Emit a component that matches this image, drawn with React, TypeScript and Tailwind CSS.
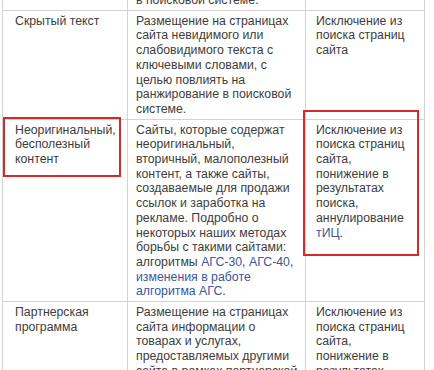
import React from 'react';

const A = ({ children }: { children: React.ReactNode }) => (
  <a href="#" className="text-[#3b55a0] no-underline">
    {children}
  </a>
);

const cell = 'border border-[#d3d3d3] align-top whitespace-nowrap pt-[3px] pb-[2px]';

export default function App() {
  return (
    <main
      className="relative h-[370px] w-[434px] overflow-hidden bg-white text-[12.3px] leading-[14.7px] text-[#3d3d3d]"
      style={{ fontFamily: '"Liberation Sans", Arial, sans-serif' }}
    >
      <table className="ml-[2px] -mt-[11px] w-[422px] table-fixed border-collapse">
        <colgroup>
          <col className="w-[125px]" />
          <col className="w-[178px]" />
          <col className="w-[119px]" />
        </colgroup>
        <tbody>
          <tr>
            <td className={`${cell} pl-[12px]`}></td>
            <td className={`${cell} pl-[8px]`}>в поисковой системе.</td>
            <td className={`${cell} pl-[10px]`}></td>
          </tr>
          <tr>
            <td className={`${cell} pl-[12px]`}>Скрытый текст</td>
            <td className={`${cell} pl-[8px]`}>
              Размещение на страницах
              <br />
              сайта невидимого или
              <br />
              слабовидимого текста с
              <br />
              ключевыми словами, с
              <br />
              целью повлиять на
              <br />
              ранжирование в поисковой
              <br />
              системе.
            </td>
            <td className={`${cell} pl-[10px]`}>
              Исключение из
              <br />
              поиска страниц
              <br />
              сайта
            </td>
          </tr>
          <tr>
            <td className={`${cell} pl-[12px]`}>
              Неоригинальный,
              <br />
              бесполезный
              <br />
              контент
            </td>
            <td className={`${cell} pl-[8px]`}>
              Сайты, которые содержат
              <br />
              неоригинальный,
              <br />
              вторичный, малополезный
              <br />
              контент, а также сайты,
              <br />
              создаваемые для продажи
              <br />
              ссылок и заработка на
              <br />
              рекламе. Подробно о
              <br />
              некоторых наших методах
              <br />
              борьбы с такими сайтами:
              <br />
              алгоритмы <A>АГС-30</A>, <A>АГС-40</A>,
              <br />
              <A>
                изменения в работе
                <br />
                алгоритма АГС
              </A>
              .
            </td>
            <td className={`${cell} pl-[10px]`}>
              Исключение из
              <br />
              поиска страниц
              <br />
              сайта,
              <br />
              понижение в
              <br />
              результатах
              <br />
              поиска,
              <br />
              аннулирование
              <br />
              <A>тИЦ</A>.
            </td>
          </tr>
          <tr>
            <td className={`${cell} pl-[12px]`}>
              Партнерская
              <br />
              программа
            </td>
            <td className={`${cell} pl-[8px]`}>
              Размещение на страницах
              <br />
              сайта информации о
              <br />
              товарах и услугах,
              <br />
              предоставляемых другими
              <br />
              сайта в рамках партнерской
              <br />
              программы.
            </td>
            <td className={`${cell} pl-[10px]`}>
              Исключение из
              <br />
              поиска страниц
              <br />
              сайта,
              <br />
              понижение в
              <br />
              результатах
              <br />
              поиска.
            </td>
          </tr>
        </tbody>
      </table>

      {/* red annotation frames */}
      <div className="absolute left-[3px] top-[117px] h-[60px] w-[118px] border-2 border-[#d42a2a]" />
      <div className="absolute left-[303px] top-[110px] h-[146px] w-[116px] border-2 border-[#d42a2a]" />
    </main>
  );
}
